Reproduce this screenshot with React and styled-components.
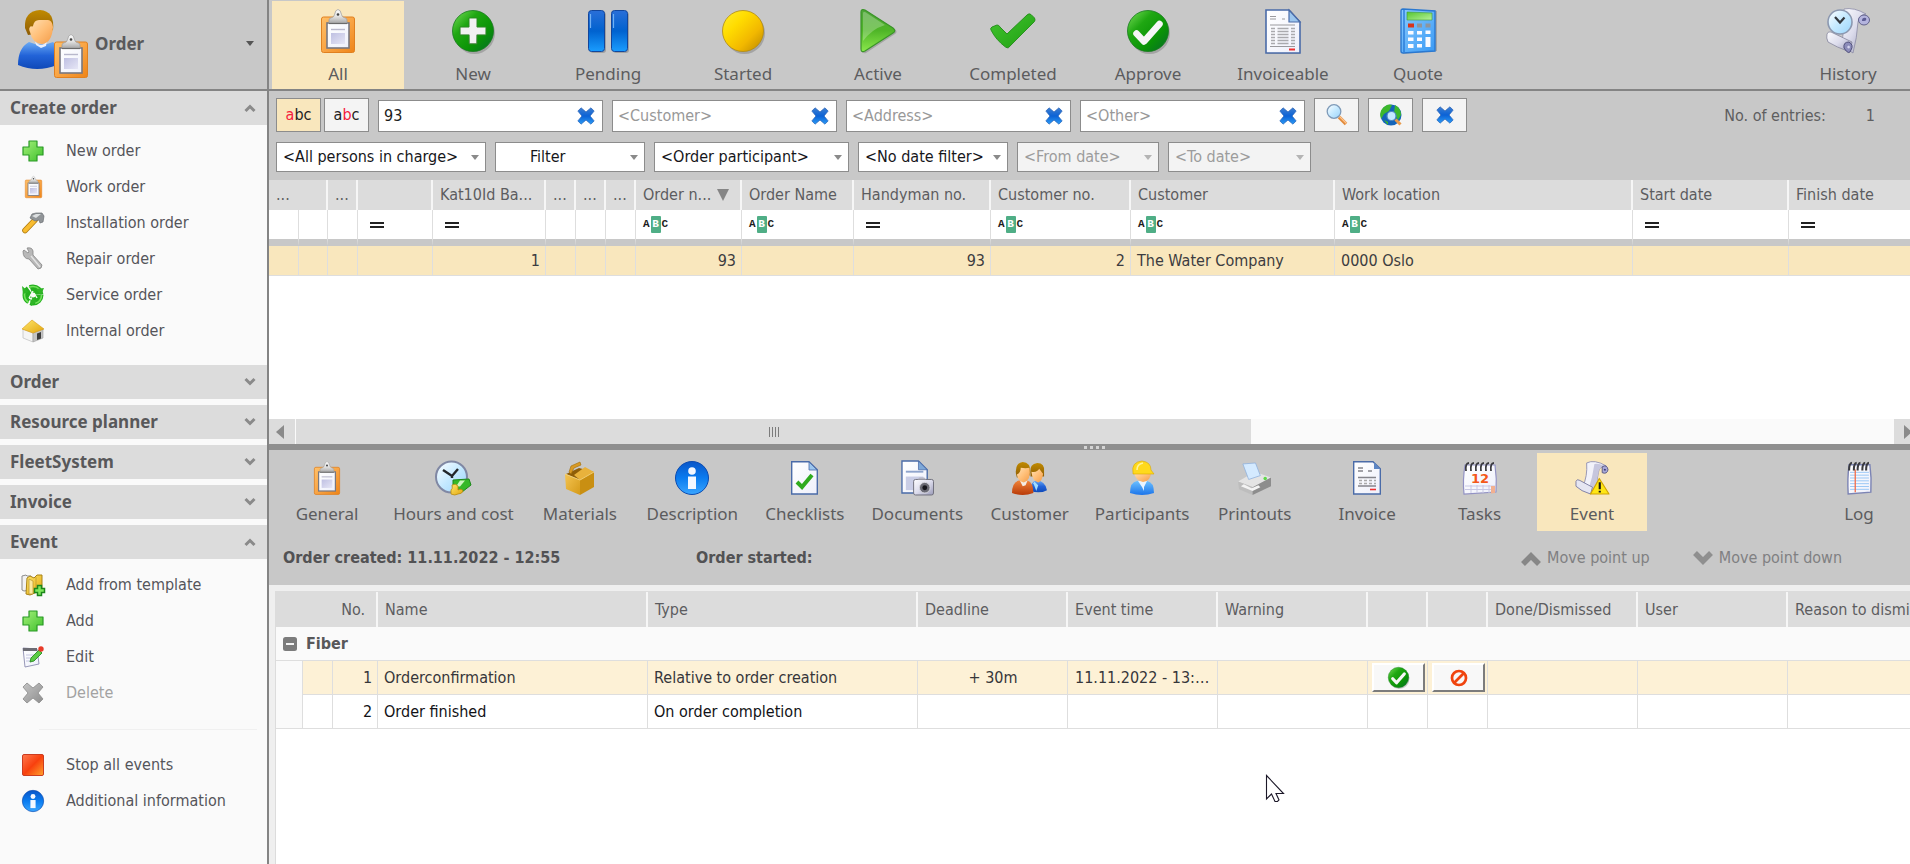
import React from "react";
import styled, { createGlobalStyle, css } from "styled-components";

const GlobalStyle = createGlobalStyle`
  * {
    box-sizing: border-box;
  }
  body {
    margin: 0;
    background: #fff;
    color: #4d4d52;
    font-family: "DejaVu Sans Condensed", Tahoma, sans-serif;
    font-size: 16px;
    line-height: 20px;
    overflow: hidden;
  }
  button, input, select {
    font: inherit;
    color: inherit;
    margin: 0;
  }
  button {
    cursor: pointer;
  }
  a {
    color: inherit;
    text-decoration: none;
  }
  svg {
    display: block;
    flex: none;
    overflow: visible;
  }
`;

/* ---------- icons ---------- */

const Grad = ({ id, stops, flat }) => (
  <linearGradient id={id} x1="0" y1="0" x2={flat ? 0 : 1} y2="1">
    {stops.map((c, i) => (
      <stop key={i} offset={i / (stops.length - 1)} stopColor={c} />
    ))}
  </linearGradient>
);

const IconDefs = () => (
  <svg width="0" height="0" aria-hidden="true">
    <defs>
      <Grad id="orange" stops={["#ffc069", "#f9a545", "#ee8418"]} />
      <Grad id="silver" flat stops={["#fdfdfd", "#e2e2e2", "#a4a4a4"]} />
      <Grad id="paper" stops={["#ffffff", "#eef0fb"]} />
      <Grad id="lilac" stops={["#bfc0e2", "#e6e6f6"]} />
      <Grad id="green" stops={["#7ce05c", "#1fa712", "#0a9306", "#056a2c"]} />
      <Grad id="lime" flat stops={["#4fa43a", "#4fb527", "#8be84c"]} />
      <Grad id="tick" stops={["#43c52f", "#1f9f12"]} />
      <Grad id="plus" stops={["#a4f07a", "#3fc02c"]} />
      <Grad id="blue" flat stops={["#2a6fd8", "#0062cf", "#1a9dff"]} />
      <Grad id="info" flat stops={["#0a56c8", "#0a7cf0", "#3aa6ff"]} />
      <Grad id="cross" flat stops={["#3f7fd0", "#0b62d6", "#2c9bf5"]} />
      <Grad id="yellow" stops={["#ffee2e", "#ffdc00", "#f2b800", "#b88600"]} />
      <Grad id="skin" stops={["#ffe0b4", "#ffbf78", "#f39c48"]} />
      <Grad id="hair" flat stops={["#c08a00", "#8f5d06"]} />
      <Grad id="shirt" flat stops={["#6aaaf4", "#2263d8", "#0f49b8"]} />
      <Grad id="sky" flat stops={["#6cc0ff", "#1b74ea"]} />
      <Grad id="rust" flat stops={["#f0843a", "#b83a08"]} />
      <Grad id="face" stops={["#ffffff", "#c4e9ff", "#9bd4fa"]} />
      <Grad id="calc" stops={["#8acbff", "#3a9af4"]} />
      <Grad id="lcd" stops={["#55c52f", "#b6f29a"]} />
      <Grad id="box" stops={["#f4c452", "#d59a18"]} />
      <Grad id="scroll" stops={["#fdfdff", "#dcdcec", "#9a9ab8"]} />
      <Grad id="grey" stops={["#c4c4c4", "#8e8e8e"]} />
      <Grad id="stop" stops={["#ff7a50", "#f8400e", "#ffa42c"]} />
      <Grad id="gold" stops={["#ffe76c", "#e2a50c"]} />
    </defs>
  </svg>
);

const ClipboardArt = () => (
  <g>
    <rect x="0.5" y="8" width="33" height="35.5" rx="2" fill="url(#orange)" stroke="#e08020" />
    <rect x="6" y="14" width="22" height="25" fill="url(#paper)" stroke="#777780" strokeWidth="1.6" />
    <path d="M10 20.5h14" stroke="#b8b8cc" strokeWidth="1.4" />
    <rect x="10" y="24" width="14" height="11" fill="url(#lilac)" />
    <path
      d="M8 14.5V11q0-2 3-2.5 2-.5 2.5-3 1-5 3.500-5t3.500 5q.5 2.500 2.500 3 3 .5 3 2.500v3.500z"
      fill="url(#silver)"
      stroke="#a0a0a0"
      strokeWidth="0.800"
    />
    <path d="M8 14.500h18" stroke="#6a6a6a" strokeWidth="1.200" />
    <circle cx="17" cy="5.500" r="1.300" fill="#444" />
  </g>
);

const CircleBack = ({ fill, edge }) => (
  <g>
    <ellipse cx="22.500" cy="23" rx="20.500" ry="21" fill="#000" opacity="0.180" />
    <circle cx="21" cy="21" r="20.500" fill={fill} stroke={edge} strokeWidth="0.800" />
  </g>
);

const CrossArt = ({ fill, stroke }) => (
  <path
    d="M5 1l6 5 6-5 4 4-5 6 5 6-4 4-6-5-6 5-4-4 5-6-5-6z"
    fill={fill}
    stroke={stroke}
    strokeWidth="0.800"
    strokeLinejoin="round"
  />
);

const PlusArt = () => (
  <path
    d="M7 1h8v6h6v8h-6v6H7v-6H1V7h6z"
    fill="url(#plus)"
    stroke="#2a9a26"
    strokeWidth="1.200"
    strokeLinejoin="round"
  />
);

const DocArt = () => (
  <g>
    <path d="M2 1.500h24l9 11V45H2z" fill="#000" opacity="0.150" />
    <path d="M1 1h23l11 12v31H1z" fill="url(#paper)" stroke="#4a6ba8" strokeWidth="1.600" />
    <path d="M24 1v12h11z" fill="#9cc6ee" stroke="#4a6ba8" strokeWidth="1.200" />
  </g>
);

const ICONS = {
  clipboard: { box: [34, 44], art: <ClipboardArt /> },
  orderPerson: {
    box: [70, 68],
    art: (
      <g>
        <path d="M0 55Q0 38 11 32q12 5 24 0 4 3 4 8v15q-20 8-39 0z" fill="url(#shirt)" />
        <path d="M17 31q6 8 12 0l-1 5-5 2-5-3z" fill="#e8eefc" />
        <path d="M7 18Q6 1 22 0q15 1 13 20l-4 2-21 3z" fill="url(#hair)" />
        <path d="M12 22q-2-4 1-6 1 1 2 0 1-6 6-6h9q4 0 5 7-1 16-11 17-10-1-12-12z" fill="url(#skin)" />
        <g transform="translate(36 24)">
          <ClipboardArt />
        </g>
      </g>
    ),
  },
  newRound: {
    box: [42, 42],
    art: (
      <g>
        <CircleBack fill="url(#green)" edge="#157a1c" />
        <path d="M17 8h8v9h9v8h-9v9h-8v-9H8v-8h9z" fill="url(#silver)" stroke="#2a8a22" />
        <path d="M18 9h6v9h9v6h-9v9h-6v-9H9v-6h9z" fill="#f1f1f1" />
      </g>
    ),
  },
  pause: {
    box: [40, 42],
    art: (
      <g>
        <rect x="2" y="2" width="16" height="41" rx="3" fill="#000" opacity="0.200" />
        <rect x="25" y="2" width="16" height="41" rx="3" fill="#000" opacity="0.200" />
        <rect x="0.500" y="0.500" width="16" height="41" rx="3" fill="url(#blue)" stroke="#12469c" />
        <rect x="23.500" y="0.500" width="16" height="41" rx="3" fill="url(#blue)" stroke="#12469c" />
        <path d="M2.500 4v14M25.500 4v14" stroke="#6fb0f4" strokeWidth="1.200" />
      </g>
    ),
  },
  started: { box: [42, 42], art: <CircleBack fill="url(#yellow)" edge="#b08a10" /> },
  play: {
    box: [36, 44],
    art: (
      <g>
        <path d="M2 4q0-4 4-2l29 18q3 3 0 5L6 44q-4 1-4-3z" fill="#000" opacity="0.180" />
        <path
          d="M1 3q0-3.500 4-2l28 18q3.500 3 0 5L5 42q-4 2-4-2z"
          fill="url(#lime)"
          stroke="#3a9428"
          strokeWidth="1.200"
        />
        <path d="M3 4q0-1.500 2-1l20 13Q12 20 3 32z" fill="#fff" opacity="0.250" />
      </g>
    ),
  },
  tick: {
    box: [46, 36],
    art: (
      <g>
        <path d="M2 18l6-5 9 8L38 2l7 5-27 29z" fill="#000" opacity="0.180" />
        <path
          d="M1 17q-1-2 1-3l5-2q2 0 3 2l7 7L37 2q2-2 4-.5l3.500 3.500q1 2 0 3.500L19 34q-2 1.500-3.500 0Q6 27 1 17z"
          fill="url(#tick)"
          stroke="#2a9220"
        />
      </g>
    ),
  },
  approve: {
    box: [42, 42],
    art: (
      <g>
        <CircleBack fill="url(#green)" edge="#157a1c" />
        <path
          d="M9.500 23.500l7.500 8L32.500 14"
          fill="none"
          stroke="#f6f6f6"
          strokeWidth="6.500"
          strokeLinecap="round"
          strokeLinejoin="round"
        />
      </g>
    ),
  },
  invoiceable: {
    box: [36, 45],
    art: (
      <g>
        <DocArt />
        <path d="M5 7.500h6M5 10h6M17 10h3M5 16h25M5 37.500h25" stroke="#9a9a9e" strokeWidth="1.200" />
        <path
          d="M6 19.500h4M6 22.500h4M6 25.500h4M6 28.500h4M6 31.500h4M6 34.500h4M12.500 19.500h11M12.500 22.500h11M12.500 25.500h11M12.500 28.500h11M12.500 31.500h11M12.500 34.500h11M26 19.500h4M26 22.500h4M26 25.500h4M26 28.500h4M26 31.500h4M26 34.500h4"
          stroke="#aaaaae"
          strokeWidth="1.300"
        />
        <path d="M24 40.500h6" stroke="#f03030" strokeWidth="2" />
      </g>
    ),
  },
  calculator: {
    box: [37, 46],
    art: (
      <g>
        <path d="M2 1l35 2v40L3 46z" fill="#000" opacity="0.180" />
        <path d="M3 1q-2 0-2 2v40q0 2 2 2l32-2V3z" fill="url(#calc)" stroke="#2a78d0" strokeWidth="1.400" />
        <path d="M4 2v42" stroke="#1d6fd0" strokeWidth="1.200" />
        <path d="M7 4l25 1v7H7z" fill="url(#lcd)" stroke="#3e9a3a" strokeWidth="0.600" />
        <path d="M8 15.500h6v4H8z" fill="#d8341a" />
        <path d="M17 15.500h5v4h-5zM25.500 15.500h5v4h-5z" fill="#8f959c" />
        <path
          d="M8 23h5.500v3.500H8zM17 23h5v3.500h-5zM25.500 22.500h5V26h-5zM8 29.500h5.500V33H8zM17 29.500h5V33h-5zM8 36h5.500v4H8zM17 36h5v3.500h-5zM25.500 29h5v10h-5z"
          fill="#fbfbff"
        />
      </g>
    ),
  },
  history: {
    box: [44, 46],
    art: (
      <g>
        <path
          d="M18 1q10-2 22 5-7 1-8 8-1 16-5 31l-12-8q4-16 3-36z"
          fill="url(#scroll)"
          stroke="#8a8aa4"
          strokeWidth="0.800"
        />
        <path d="M1 26q1-3 4-2l21 10-2 10Q10 39 2 34q-2-4-1-8z" fill="url(#scroll)" stroke="#85859c" strokeWidth="0.800" />
        <path d="M18 40q-1-6 5-6 5 3 2 8-2 6-7-2z" fill="#8c8cba" stroke="#50507c" />
        <path d="M21 39q2-3 3 0-1 3-3 0z" fill="#d4d4ee" />
        <ellipse cx="38" cy="12" rx="5.500" ry="5" fill="#b4b4de" stroke="#62628c" />
        <path d="M36 13q0-4 4-3 1 3-2 3z" fill="#5c5c94" />
        <circle cx="14" cy="14" r="12" fill="url(#face)" stroke="#8c98b0" strokeWidth="1.600" />
        <path d="M9 9l5 5.500 4.500-5" fill="none" stroke="#33383e" strokeWidth="2.200" />
      </g>
    ),
  },
  hours: {
    box: [36, 36],
    art: (
      <g>
        <circle cx="16.500" cy="17" r="15.500" fill="url(#face)" stroke="#8088a4" strokeWidth="2" />
        <path d="M8 10l9 6 6-7M17 16v2" fill="none" stroke="#22262a" strokeWidth="2.400" />
        <path d="M18 20l16-1 2 6-9 7-9-5z" fill="#35b828" stroke="#1d8a1c" />
        <path d="M25 20.500h5l-5 6h-4z" fill="#cdf5c0" />
        <path d="M17 25q4-2 6 1v4q4-2 5 1-1 3-5 3-3 2-7 0v-4q2-1 1-5z" fill="url(#gold)" stroke="#b88a10" strokeWidth="0.800" />
      </g>
    ),
  },
  box: {
    box: [29, 33],
    art: (
      <g>
        <path d="M0 12l15 6v15L1 27z" fill="url(#box)" />
        <path d="M29 10l-14 8v15l14-8z" fill="#c98f12" />
        <path d="M1 12l13-6 15 4-14 8z" fill="#8f5e08" />
        <path d="M4 10l2-6 9-4 1 3-7 3-3 6z" fill="#d99a24" stroke="#a06c0a" strokeWidth="0.600" />
        <path d="M9 13l11-8 9 5-14 8z" fill="#e8b23c" />
        <path d="M0 12l15 6 14-8" fill="none" stroke="#f8d880" strokeWidth="0.800" />
      </g>
    ),
  },
  info: {
    box: [34, 34],
    art: (
      <g>
        <circle cx="17" cy="17" r="16.500" fill="url(#info)" stroke="#0b4bb0" />
        <circle cx="17" cy="10" r="3.800" fill="#f4f8ff" />
        <path d="M13 15.500h8V28h-8z" fill="#f4f8ff" />
      </g>
    ),
  },
  checklist: {
    box: [27, 34],
    art: (
      <g>
        <path d="M0.700 0.700H18l8.300 8V33H0.700z" fill="url(#paper)" stroke="#4a6ba8" strokeWidth="1.400" />
        <path d="M18 1v8h8z" fill="#9cc6ee" stroke="#4a6ba8" strokeWidth="0.800" />
        <path d="M6 21l5 5 10-12" fill="none" stroke="#2fab1e" strokeWidth="4" />
      </g>
    ),
  },
  documents: {
    box: [34, 37],
    art: (
      <g>
        <path d="M1 1h17l9 9v24H1z" fill="url(#paper)" stroke="#4a6ba8" strokeWidth="1.400" />
        <path d="M18 1v9h9z" fill="#7ea8d8" stroke="#4a6ba8" strokeWidth="0.800" />
        <path d="M5 12h18" stroke="#8fa4cc" strokeWidth="2" />
        <path d="M5 17h18v14H5z" fill="#c9cde6" />
        <rect x="13" y="20" width="20.500" height="16" rx="2" fill="url(#scroll)" stroke="#70707c" />
        <path d="M17 20l2-2h5l2 2z" fill="#b4b4c0" />
        <circle cx="24.500" cy="28.500" r="5.500" fill="#6a6a74" stroke="#d8d8e0" />
        <circle cx="24.500" cy="28.500" r="2.500" fill="#16161c" />
      </g>
    ),
  },
  customer: {
    box: [36, 34],
    art: (
      <g>
        <path d="M19 30q0-10 6-11 9 0 11 10-7 4-17 1z" fill="url(#shirt)" />
        <path d="M23 20l4 4-2 6-3-8z" fill="#a0dcff" />
        <path d="M19 10q-1-8 7-9 8 0 7 9v5H19z" fill="url(#hair)" />
        <path d="M20 10q6 1 8-3 3 4 4 5-1 8-5 9-6-1-7-11z" fill="url(#skin)" />
        <path d="M0 32q0-11 7-13h9q6 2 6 13-11 4-22 0z" fill="url(#rust)" />
        <path d="M8 19h8l-2 5-3 1z" fill="#f4ece4" />
        <path d="M4 12Q3 1 11 0q8 0 8 11l-2 5H5z" fill="url(#hair)" />
        <path d="M5 13q4-2 4-7 5 1 9 0 2 13-6 15-6-1-7-8z" fill="url(#skin)" />
      </g>
    ),
  },
  participant: {
    box: [24, 34],
    art: (
      <g>
        <path d="M0 32Q0 21 7 20h10q7 1 7 12-12 4-24 0z" fill="url(#sky)" />
        <path d="M8 20h9l-3 6v4l-2-4z" fill="#e8f4ff" />
        <path d="M4 11h17q0 9-8 10-8-2-9-10z" fill="url(#skin)" />
        <path d="M3 12Q1 1 12 0q9 1 9 9l3 4H3z" fill="#ffd91c" stroke="#d8a800" strokeWidth="0.600" />
        <path d="M7 9q0-6 6-7" fill="none" stroke="#fff39a" strokeWidth="1.600" />
      </g>
    ),
  },
  printer: {
    box: [34, 34],
    art: (
      <g>
        <path d="M0 20l9-5 14-3 11 4-18 10z" fill="#e4e4e4" />
        <path d="M5 2l13-1 5 13-12 4z" fill="#d4eaff" stroke="#8fb0dc" strokeWidth="0.800" />
        <path d="M0 20l15 6v8L1 28z" fill="#bdbdbd" />
        <path d="M15 26l19-10v9l-19 9z" fill="#8d8d8d" />
        <path d="M3 25l12 5 8-4-2-2-7 3-8-4z" fill="#f4f4f4" />
        <circle cx="28" cy="17" r="1.800" fill="#5fd84a" />
      </g>
    ),
  },
  invoice: {
    box: [28, 34],
    art: (
      <g>
        <path d="M0.700 0.700H20l7.300 7V33H0.700z" fill="url(#paper)" stroke="#4a6ba8" strokeWidth="1.400" />
        <path d="M21 1v7h6z" fill="#5d86c4" />
        <path d="M5 7h5M5 10h5M15 10h4M5 16.500h18M5 25h18" stroke="#85858c" strokeWidth="1.300" />
        <path
          d="M6 19.500h3M11 19.500h3M16 19.500h3M21 19.500h2M6 22.500h3M11 22.500h3M16 22.500h3M21 22.500h2"
          stroke="#aaa"
          strokeWidth="1.300"
        />
        <path d="M17 28.500h6" stroke="#f03030" strokeWidth="1.600" />
      </g>
    ),
  },
  tasks: {
    box: [34, 33],
    art: (
      <g>
        <path d="M2 3h30q2 14 1 27l-32 2Q-.5 18 2 3z" fill="url(#paper)" stroke="#9292c4" strokeWidth="1.200" />
        <path d="M2 24h30M2 27.500h30M8 23v8M14 23v8M20 23v8M26 23v8" stroke="#c8c8e4" />
        <path d="M28 24h4v7l-4 .5z" fill="#f2b090" />
        <path
          d="M3 9q-1-8 3-8M8 9q-1-8 3-8M13 9q-1-8 3-8M18 9q-1-8 3-8M23 9q-1-8 3-8M28 9q-1-8 3-8"
          fill="none"
          stroke="#3a3a3e"
          strokeWidth="1.800"
        />
        <text x="17" y="21" textAnchor="middle" fontSize="13" fontWeight="700" fontFamily="DejaVu Sans" fill="#f4581a">
          12
        </text>
      </g>
    ),
  },
  event: {
    box: [35, 35],
    art: (
      <g>
        <path
          d="M12 2q8-4 20 3-7 0-8 7-1 11-5 21L8 26q5-10 4-24z"
          fill="#f2f2fa"
          stroke="#8c8cb0"
          strokeWidth="0.900"
        />
        <path d="M20 3q-2 14-6 26l5 3q4-10 5-20 1-6 6-7-6-3-10-2z" fill="#c6c6de" />
        <path d="M1 21q1-3 4-1l13 7-2 7Q6 31 1 26z" fill="#e6e6f2" stroke="#74749c" strokeWidth="0.900" />
        <path d="M28 6q5-3 6 3-1 5-6 3z" fill="#a8a8d8" stroke="#52527c" strokeWidth="0.900" />
        <path d="M29.500 9q1-2 2.500 0-1 2-2.500 0z" fill="#3c3c74" />
        <path d="M25 18l10 16H16z" fill="#ffe614" stroke="#d0a400" strokeWidth="1.200" strokeLinejoin="round" />
        <path d="M25.500 22v7M25.500 30.500v2" stroke="#181818" strokeWidth="2.200" />
      </g>
    ),
  },
  log: {
    box: [26, 36],
    art: (
      <g>
        <path d="M2 4h22q2 14 1 29l-24 2Q0 18 2 4z" fill="url(#paper)" stroke="#7c84b4" strokeWidth="1.500" />
        <path d="M3 12h20M3 15h20M3 18h20M3 21h20M3 24h20M3 27h20M3 30h20" stroke="#8cc0f4" strokeWidth="0.900" />
        <path d="M8.500 9v24" stroke="#f4704c" strokeWidth="1.400" />
        <path
          d="M2 10q0-8 3-8M7 10q0-8 3-8M11 10q0-8 3-8M16 10q0-8 3-8M20 10q0-8 3-8"
          fill="none"
          stroke="#3a3a3e"
          strokeWidth="2.200"
        />
      </g>
    ),
  },
  plus: { box: [22, 22], art: <PlusArt /> },
  hammer: {
    box: [22, 22],
    art: (
      <g>
        <path d="M13 8L3 18.500" stroke="#b07c10" strokeWidth="5.600" strokeLinecap="round" />
        <path d="M13 8L3 18.500" stroke="#f8bc30" strokeWidth="4" strokeLinecap="round" />
        <path d="M8 6l2-4 4-1h6l2 3-1 6-3 1-1-3-4 1z" fill="#909497" stroke="#6c7074" strokeWidth="0.700" />
        <path d="M10 4l4-2h5l-5 4z" fill="#dcdfe0" />
      </g>
    ),
  },
  wrench: {
    box: [22, 22],
    art: (
      <g>
        <path
          d="M1 3l1-1 4 3 1-1-2-4q5-1 6 3l0 4 9 10q0 4-4 4L7 11Q1 11 1 3z"
          fill="#b8b8b8"
          stroke="#858585"
          strokeWidth="0.800"
        />
        <path d="M9 8l9 11" stroke="#e4e4e4" strokeWidth="1.400" />
      </g>
    ),
  },
  recycle: {
    box: [22, 22],
    art: (
      <g>
        <circle cx="11" cy="11" r="6.500" fill="none" stroke="#25b01f" strokeWidth="8" strokeDasharray="12.200 1.400" />
        <circle cx="11" cy="11" r="8.500" fill="none" stroke="#74e25c" strokeWidth="1.600" strokeDasharray="11 6.800" />
        <path d="M0 2l1 8 6-2zM22 4l-8 1 5 6zM9 22l-1-9 7 4z" fill="#2fb526" />
        <path d="M11 7l-4 7M12 9l3 5M7 14l3 1" stroke="#f0fcee" strokeWidth="1.400" />
      </g>
    ),
  },
  house: {
    box: [22, 22],
    art: (
      <g>
        <path d="M1 9l10 4v9L1 18z" fill="#f4f4f4" stroke="#b4b4b4" strokeWidth="0.600" />
        <path d="M11 13l10-4v9l-10 4z" fill="#c4c4c4" stroke="#a0a0a0" strokeWidth="0.600" />
        <path d="M15 13.500l4-1.500v6.500L15 20z" fill="#3c3c3c" />
        <path d="M0 9L10 0l12 9-11 4z" fill="url(#gold)" stroke="#d89a10" strokeWidth="0.600" />
      </g>
    ),
  },
  template: {
    box: [24, 22],
    art: (
      <g>
        <path d="M1 2l4-1 1 1h4v14l-7 1-2-1z" fill="#f2f2f2" stroke="#8c8c8c" />
        <path d="M5 20L6 4l3-2 4 2 3-3h5v15l-12 5z" fill="url(#gold)" stroke="#a88218" />
        <path d="M8 20V5l4 2v13zM15 3v12" fill="#fbe9a0" stroke="#b8942c" strokeWidth="0.700" />
        <g transform="translate(13 11) scale(0.500)">
          <path d="M7 1h8v6h6v8h-6v6H7v-6H1V7h6z" fill="#7fe85c" stroke="#1c861c" strokeWidth="3" />
        </g>
      </g>
    ),
  },
  edit: {
    box: [22, 22],
    art: (
      <g>
        <path d="M1 2l14 1 2 15-14 3z" fill="url(#paper)" stroke="#8c8cb0" strokeWidth="0.900" />
        <path d="M1 2h14v3H1z" fill="#6c6c74" />
        <path d="M4 9h9M4 12h8M4 15h6" stroke="#c4c4e0" />
        <path d="M8 16l1-4 8-8 3 3-8 8z" fill="#5ccc44" stroke="#2a8a24" strokeWidth="0.900" />
        <circle cx="19" cy="3" r="2.700" fill="#e83a28" />
      </g>
    ),
  },
  crossGrey: { box: [22, 22], art: <CrossArt fill="url(#grey)" stroke="#8a8a8a" /> },
  crossBlue: { box: [22, 22], art: <CrossArt fill="url(#cross)" stroke="#2560b4" /> },
  stop: {
    box: [22, 22],
    art: <rect x="0.500" y="0.500" width="21" height="21" rx="1.500" fill="url(#stop)" stroke="#cc3c20" />,
  },
  search: {
    box: [22, 22],
    art: (
      <g>
        <path d="M13 13l7 7" stroke="#e08a3c" strokeWidth="3.600" />
        <path d="M13 12l7.500 7.500" stroke="#ffc48c" strokeWidth="1.200" />
        <circle cx="8" cy="7.500" r="6.800" fill="url(#face)" stroke="#7e9ab8" strokeWidth="1.300" />
      </g>
    ),
  },
  globe: {
    box: [22, 22],
    art: (
      <g>
        <circle cx="11" cy="11" r="10.500" fill="#1464b8" />
        <path d="M2 5q5-6 10-4l-3 6-5 3-3 5q-2-6 1-10zM15 1q6 3 6 10l-3 5-4-7zM4 16l4 2v3z" fill="#3cb82c" />
        <circle cx="11.500" cy="12" r="4.500" fill="#c4e9ff" stroke="#4c86c0" strokeWidth="1.200" />
        <path d="M15.500 15.500l5 5" stroke="#e89a4c" strokeWidth="3" />
      </g>
    ),
  },
  forbid: {
    box: [20, 20],
    art: (
      <g fill="none" stroke="#f0440e" strokeWidth="3">
        <circle cx="10" cy="10" r="7.800" />
        <path d="M4.500 15.500l11-11" />
      </g>
    ),
  },
  chevronUp: { box: [12, 8], art: <path d="M1.500 7L6 2.500 10.500 7" fill="none" stroke="#8a8a8a" strokeWidth="3" /> },
  chevronDown: { box: [12, 8], art: <path d="M1.500 1L6 5.500 10.500 1" fill="none" stroke="#8a8a8a" strokeWidth="3" /> },
  moveUp: { box: [20, 15], art: <path d="M2 13l8-8 8 8" fill="none" stroke="#878787" strokeWidth="5.500" /> },
  moveDown: { box: [20, 15], art: <path d="M2 2l8 8 8-8" fill="none" stroke="#8f8f8f" strokeWidth="5.500" /> },
  caret: { box: [8, 5], art: <path d="M0 0h8L4 5z" fill="currentColor" /> },
  sort: { box: [12, 12], art: <path d="M0 0h12L6 12z" fill="#858585" /> },
  arrowLeft: { box: [8, 14], art: <path d="M8 0v14L0 7z" fill="#8a8a8a" /> },
  arrowRight: { box: [8, 14], art: <path d="M0 0v14l8-7z" fill="#8a8a8a" /> },
  equals: { box: [14, 6], art: <path d="M0 1h14M0 5h14" stroke="#222" strokeWidth="2" /> },
  collapse: {
    box: [14, 14],
    art: (
      <g>
        <rect width="14" height="14" rx="2.500" fill="#7c7c7c" />
        <path d="M3 7h8" stroke="#f4f4f4" strokeWidth="2" />
      </g>
    ),
  },
  cursor: {
    box: [18, 27],
    art: (
      <path
        d="M0.500 0.500v23.500l5-5 3.500 7.500h2.500l1.500-1.500-3-6.500h7.500z"
        fill="#fff"
        stroke="#1c1828"
        strokeWidth="1.100"
      />
    ),
  },
};

const Icon = ({ name, height }) => {
  const { box, art } = ICONS[name];
  const h = height || box[1];
  return (
    <svg width={Math.round((box[0] * h) / box[1])} height={h} viewBox={`0 0 ${box[0]} ${box[1]}`} aria-hidden="true">
      {art}
    </svg>
  );
};

/* ---------- sidebar ---------- */

const Page = styled.div`
  display: grid;
  grid-template-columns: 269px minmax(0, 1fr);
  min-height: 100vh;
`;

const Sidebar = styled.aside`
  background: #fafafa;
  border-right: 2px solid #848484;
`;

const ModuleButton = styled.button`
  display: flex;
  align-items: center;
  width: 100%;
  height: 91px;
  padding: 0 13px 2px 18px;
  border: 0;
  border-bottom: 2px solid #848484;
  background: #c8c8c8;
  font: 700 17px/24px "Noto Sans", sans-serif;
  color: #5a5a5c;
  gap: 7px;
  svg:last-child {
    margin-left: auto;
    color: #555;
  }
`;

const Section = styled.section`
  margin-bottom: ${(p) => (p.$open ? "16px" : "6px")};
`;

const SectionHead = styled.button`
  display: flex;
  align-items: center;
  justify-content: space-between;
  width: 100%;
  height: 34px;
  padding: 0 11px 0 10px;
  border: 0;
  background: #dcdcdc;
  font: 700 17px/24px "Noto Sans", sans-serif;
  color: #58585a;
`;

const MenuList = styled.ul`
  list-style: none;
  margin: 0;
  padding: 8px 0 0;
`;

const MenuLink = styled.a`
  display: flex;
  align-items: center;
  height: 36px;
  color: ${(p) => (p.$disabled ? "#a2a2a2" : "#55555a")};
`;

const MenuIcon = styled.span`
  display: flex;
  justify-content: center;
  width: 66px;
`;

const MenuDivider = styled.li`
  height: 36px;
  padding: 18px 10px 0 39px;
  &::before {
    content: "";
    display: block;
    border-top: 1px solid #f0f0f0;
  }
`;

/* ---------- toolbars ---------- */

const Main = styled.main`
  display: flex;
  flex-direction: column;
  min-width: 0;
`;

const toolText = css`
  font: 17px/24px "Noto Sans", sans-serif;
  color: #5c5c5e;
`;

const StatusBar = styled.nav`
  display: flex;
  gap: 3px;
  height: 91px;
  padding: 1px 0 0 3px;
  background: #c8c8c8;
  border-bottom: 2px solid #848484;
`;

const StatusButton = styled.button`
  ${toolText}
  display: flex;
  flex-direction: column;
  align-items: center;
  width: ${(p) => (p.$last ? "124px" : "132px")};
  margin-left: ${(p) => (p.$last ? "auto" : "0")};
  padding: 6px 0 0;
  gap: 7px;
  border: 0;
  background: ${(p) => (p.$active ? "#f9e7bd" : "transparent")};
`;

const StatusIcon = styled.span`
  display: flex;
  align-items: center;
  height: 48px;
`;

const Filters = styled.form`
  background: #c8c8c8;
  padding: 7px 7px 8px;
`;

const FilterRow = styled.div`
  display: flex;
  align-items: flex-end;
  gap: 9px;
  & + & {
    margin-top: 10px;
  }
`;

const MatchGroup = styled.div`
  display: flex;
  gap: 3px;
`;

const ToolButton = styled.button`
  display: flex;
  align-items: center;
  justify-content: center;
  width: 45px;
  height: 34px;
  padding: 0;
  border: 1px solid #8c8c8c;
  background: ${(p) => (p.$active ? "#f9e7bd" : "#f4f4f4")};
  color: #222;
  em {
    font-style: normal;
    color: #f5203c;
  }
`;

const SearchField = styled.label`
  display: flex;
  align-items: center;
  width: 225px;
  height: 32px;
  padding-right: 7px;
  border: 1px solid #8c8c8c;
  background: #fff;
  input {
    flex: 1;
    min-width: 0;
    border: 0;
    outline: 0;
    padding: 0 0 0 5px;
    background: none;
    color: #1c1c20;
  }
  input::placeholder {
    color: #989898;
    opacity: 1;
  }
`;

const ClearButton = styled.button`
  padding: 0;
  border: 0;
  background: none;
`;

const Entries = styled.p`
  display: flex;
  gap: 40px;
  margin: 0 28px 0 auto;
  line-height: 32px;
  color: #5e5e60;
`;

const SelectField = styled.label`
  position: relative;
  width: ${(p) => p.$width}px;
  height: 30px;
  color: ${(p) => (p.$off ? "#9c9c9c" : "#16161a")};
  select {
    appearance: none;
    width: 100%;
    height: 100%;
    padding: 0 18px 0 ${(p) => (p.$indent ? "34px" : "6px")};
    border: 1px solid #8c8c8c;
    border-radius: 0;
    background: ${(p) => (p.$off ? "#f3f3f3" : "#fff")};
    opacity: 1;
  }
  svg {
    position: absolute;
    right: 7px;
    top: 13px;
    color: ${(p) => (p.$off ? "#b4b4b4" : "#8a8a8a")};
    pointer-events: none;
  }
`;

/* ---------- order list ---------- */

const OrderPane = styled.div`
  height: 239px;
  overflow: hidden;
  background: #fff;
`;

const Grid = styled.table`
  width: 100%;
  table-layout: fixed;
  border-collapse: separate;
  border-spacing: 0;
  th,
  td {
    padding: 0 5px 0 6px;
    overflow: hidden;
    white-space: nowrap;
    text-align: left;
    border-right: 1px solid #dedede;
  }
  th {
    padding-left: 7px;
    background: #dcdcdc;
    border-right: 2px solid #f6f6f6;
    font-weight: 400;
    color: #5c5c60;
  }
  th:last-child,
  td:last-child {
    padding-right: 0;
    border-right: 0;
  }
`;

const OrderGrid = styled(Grid)`
  th {
    height: 30px;
  }
`;

const FilterCells = styled.tr`
  td {
    height: 36px;
    border-bottom: 7px solid #c8c8c8;
  }
`;

const OrderRow = styled.tr`
  td {
    height: 30px;
    background: #f9e7bd;
    border-bottom: 1px solid #dedede;
    color: #3c3c40;
  }
`;

const Cell = styled.td`
  && {
    text-align: ${(p) => p.$align || "left"};
  }
`;

const SortHead = styled.span`
  display: flex;
  align-items: center;
  gap: 6px;
`;

const Indent = styled.span`
  display: block;
  padding-left: 6px;
`;

const AbcMark = styled.span`
  display: flex;
  align-items: center;
  gap: 1px;
  padding-left: 1px;
  font: 700 11px/17px "Liberation Mono", monospace;
  color: #1c1c1c;
  b {
    width: 10px;
    text-align: center;
    border-radius: 1px;
    background: #4fae86;
    color: #fff;
  }
`;

const ScrollBar = styled.div`
  display: grid;
  grid-template-columns: 26px minmax(0, 956fr) minmax(0, 641fr) 16px;
  gap: 1px;
  height: 25px;
  background: #fafafa;
`;

const ScrollEnd = styled.button`
  display: flex;
  align-items: center;
  padding: 0 0 0 ${(p) => (p.$right ? "10px" : "7px")};
  border: 0;
  overflow: hidden;
  background: #dcdcdc;
  ${(p) => p.$right && "grid-column: 4;"}
`;

const ScrollThumb = styled.div`
  display: flex;
  align-items: center;
  justify-content: center;
  gap: 2px;
  background: #dcdcdc;
  i {
    width: 1px;
    height: 10px;
    background: #7c7c7c;
  }
`;

const Splitter = styled.div`
  display: flex;
  align-items: center;
  justify-content: center;
  gap: 3px;
  height: 6px;
  padding-left: 10px;
  background: #8f8f8f;
  i {
    width: 3px;
    height: 3px;
    background: #d4d4d4;
  }
`;

/* ---------- detail pane ---------- */

const Details = styled.section`
  position: relative;
  flex: 1;
  background: #efefef;
`;

const DetailHead = styled.div`
  background: #c8c8c8;
`;

const TabBar = styled.nav`
  display: flex;
  padding: 3px 0 0 3px;
`;

const TabGroup = styled.div`
  display: flex;
  flex: 1;
  justify-content: space-between;
  margin-right: 161px;
`;

const Tab = styled.button`
  ${toolText}
  display: flex;
  flex-direction: column;
  align-items: center;
  gap: 6px;
  width: ${(p) => p.$width || 110}px;
  height: 78px;
  padding: 7px 0 0;
  border: 0;
  white-space: nowrap;
  background: ${(p) => (p.$active ? "#f9e7bd" : "transparent")};
`;

const TabIcon = styled.span`
  display: flex;
  align-items: center;
  height: 36px;
`;

const InfoBar = styled.div`
  display: flex;
  align-items: center;
  height: 54px;
  padding: 0 68px 0 14px;
`;

const InfoText = styled.strong`
  min-width: 413px;
  color: #525254;
`;

const MoveGroup = styled.div`
  display: flex;
  gap: 43px;
  margin-left: auto;
`;

const MoveButton = styled.button`
  display: flex;
  align-items: center;
  gap: 6px;
  padding: 0;
  border: 0;
  background: none;
  color: #808082;
`;

const EventPane = styled.div`
  min-height: 274px;
  margin: 6px 0 0 6px;
  border: solid #dcdcdc;
  border-width: 1px 0 0 1px;
  background: #fff;
`;

const EventGrid = styled(Grid)`
  th {
    height: 35px;
    padding-left: 7px;
  }
  th:first-child {
    text-align: right;
    padding-right: 11px;
  }
`;

const GroupCell = styled.td`
  &&& {
    height: 34px;
    padding: 0 7px;
    background: #fafafa;
    border-right: 0;
    border-bottom: 1px solid #dedede;
  }
`;

const GroupButton = styled.button`
  display: flex;
  align-items: center;
  gap: 9px;
  padding: 0;
  border: 0;
  background: none;
  font-weight: 700;
  color: #58585a;
`;

const EventRow = styled.tr`
  td {
    height: 34px;
    border-bottom: 1px solid #dedede;
    background: ${(p) => (p.$active ? "#fdf1d6" : "#fff")};
    color: ${(p) => (p.$active ? "#36363a" : "#121216")};
  }
`;

const GutterCell = styled.td`
  && {
    background: #fafafa;
  }
`;

const TimeCell = styled.td`
  && {
    padding-left: 7px;
    text-overflow: ellipsis;
  }
`;

const ActionCell = styled.td`
  && {
    padding: 0 2px 0 4px;
  }
`;

const ActionButton = styled.button`
  display: flex;
  align-items: center;
  justify-content: center;
  width: 100%;
  height: 29px;
  padding: 0;
  border: 2px solid;
  border-color: #fff #7c7c7c #7c7c7c #fff;
  background: #f8f8f8;
`;

const Pointer = styled.span`
  position: absolute;
  left: calc(61% - 4px);
  top: 325px;
  pointer-events: none;
`;

/* ---------- data ---------- */

const createItems = [
  ["plus", "New order"],
  ["clipboard", "Work order"],
  ["hammer", "Installation order"],
  ["wrench", "Repair order"],
  ["recycle", "Service order"],
  ["house", "Internal order"],
];

const eventItems = [
  ["template", "Add from template"],
  ["plus", "Add"],
  ["edit", "Edit"],
  ["crossGrey", "Delete", true],
];

const eventExtras = [
  ["stop", "Stop all events"],
  ["info", "Additional information"],
];

const statuses = [
  ["clipboard", "All"],
  ["newRound", "New"],
  ["pause", "Pending"],
  ["started", "Started"],
  ["play", "Active"],
  ["tick", "Completed"],
  ["approve", "Approve"],
  ["invoiceable", "Invoiceable"],
  ["calculator", "Quote"],
];

const selects = [
  { text: "<All persons in charge>", width: 210 },
  { text: "Filter", width: 150, indent: true },
  { text: "<Order participant>", width: 195 },
  { text: "<No date filter>", width: 150 },
  { text: "<From date>", width: 142, off: true },
  { text: "<To date>", width: 143, off: true },
];

const orderColumns = [
  { w: 30, head: "...", span: 2 },
  { w: 29 },
  { w: 30, head: "..." },
  { w: 75, head: "", filter: "eq" },
  { w: 113, head: "Kat10Id Ba...", filter: "eq", value: "1", align: "right" },
  { w: 30, head: "..." },
  { w: 30, head: "..." },
  { w: 30, head: "..." },
  { w: 106, head: "Order n...", filter: "abc", value: "93", align: "right", sorted: true },
  { w: 112, head: "Order Name", filter: "abc" },
  { w: 137, head: "Handyman no.", filter: "eq", value: "93", align: "right" },
  { w: 140, head: "Customer no.", filter: "abc", value: "2", align: "right" },
  { w: 204, head: "Customer", filter: "abc", value: "The Water Company" },
  { w: 298, head: "Work location", filter: "abc", value: "0000 Oslo" },
  { w: 156, head: "Start date", filter: "eq" },
  { head: "Finish date", filter: "eq" },
];

const tabs = [
  ["clipboard", "General", 34],
  ["hours", "Hours and cost", 36, 138],
  ["box", "Materials", 33],
  ["info", "Description", 34],
  ["checklist", "Checklists", 34],
  ["documents", "Documents", 36],
  ["customer", "Customer", 33],
  ["participant", "Participants", 34],
  ["printer", "Printouts", 33],
  ["invoice", "Invoice", 34],
  ["tasks", "Tasks", 33],
  ["event", "Event", 34],
];

const eventWidths = [27, 30, 45, 270, 270, 150, 150, 150, 60, 60, 150, 150, null];
const eventHeads = ["Name", "Type", "Deadline", "Event time", "Warning", "", "", "Done/Dismissed", "User", "Reason to dismiss"];

/* ---------- parts ---------- */

const MenuItem = ({ icon, text, disabled }) => (
  <li>
    <MenuLink href="#" $disabled={disabled} aria-disabled={disabled}>
      <MenuIcon>
        <Icon name={icon} height={22} />
      </MenuIcon>
      {text}
    </MenuLink>
  </li>
);

const SidebarSection = ({ title, open, children }) => (
  <Section $open={open}>
    <SectionHead type="button" aria-expanded={!!open}>
      {title}
      <Icon name={open ? "chevronUp" : "chevronDown"} />
    </SectionHead>
    {children}
  </Section>
);

const Search = ({ label, value }) => (
  <SearchField>
    <input type="text" aria-label={label} placeholder={value ? undefined : `<${label}>`} defaultValue={value} />
    <ClearButton type="button" aria-label={`Clear ${label}`}>
      <Icon name="crossBlue" height={18} />
    </ClearButton>
  </SearchField>
);

const FilterMark = ({ type }) => {
  if (type === "abc") {
    return (
      <AbcMark>
        A<b>B</b>C
      </AbcMark>
    );
  }
  if (type === "eq") {
    return (
      <Indent>
        <Icon name="equals" />
      </Indent>
    );
  }
  return null;
};

const OrderTable = () => (
  <OrderGrid>
    <colgroup>
      {orderColumns.map((c, i) => (
        <col key={i} width={c.w} />
      ))}
    </colgroup>
    <thead>
      <tr>
        {orderColumns
          .filter((c) => c.head !== undefined)
          .map((c, i) => (
            <th key={i} colSpan={c.span}>
              {c.sorted ? (
                <SortHead>
                  {c.head}
                  <Icon name="sort" />
                </SortHead>
              ) : (
                c.head
              )}
            </th>
          ))}
      </tr>
    </thead>
    <tbody>
      <FilterCells>
        {orderColumns.map((c, i) => (
          <td key={i}>
            <FilterMark type={c.filter} />
          </td>
        ))}
      </FilterCells>
      <OrderRow>
        {orderColumns.map((c, i) => (
          <Cell key={i} $align={c.align}>
            {c.value}
          </Cell>
        ))}
      </OrderRow>
    </tbody>
  </OrderGrid>
);

const EventTable = () => (
  <EventGrid>
    <colgroup>
      {eventWidths.map((w, i) => (
        <col key={i} width={w || undefined} />
      ))}
    </colgroup>
    <thead>
      <tr>
        <th colSpan={3}>No.</th>
        {eventHeads.map((h, i) => (
          <th key={i}>{h}</th>
        ))}
      </tr>
    </thead>
    <tbody>
      <tr>
        <GroupCell colSpan={13}>
          <GroupButton type="button">
            <Icon name="collapse" />
            Fiber
          </GroupButton>
        </GroupCell>
      </tr>
      <EventRow $active>
        <GutterCell rowSpan={2} />
        <td />
        <Cell $align="right">1</Cell>
        <td>Orderconfirmation</td>
        <td>Relative to order creation</td>
        <Cell $align="center">+ 30m</Cell>
        <TimeCell>11.11.2022 - 13:25</TimeCell>
        <td />
        <ActionCell>
          <ActionButton type="button" aria-label="Done">
            <Icon name="approve" height={21} />
          </ActionButton>
        </ActionCell>
        <ActionCell>
          <ActionButton type="button" aria-label="Dismiss">
            <Icon name="forbid" height={18} />
          </ActionButton>
        </ActionCell>
        <td />
        <td />
        <td />
      </EventRow>
      <EventRow>
        <td />
        <Cell $align="right">2</Cell>
        <td>Order finished</td>
        <td>On order completion</td>
        <td />
        <td />
        <td />
        <td />
        <td />
        <td />
        <td />
        <td />
      </EventRow>
    </tbody>
  </EventGrid>
);

export default function App() {
  return (
    <Page>
      <GlobalStyle />
      <Sidebar>
        <ModuleButton type="button">
          <Icon name="orderPerson" />
          Order
          <Icon name="caret" />
        </ModuleButton>
        <SidebarSection title="Create order" open>
          <MenuList>
            {createItems.map(([icon, text]) => (
              <MenuItem key={text} icon={icon} text={text} />
            ))}
          </MenuList>
        </SidebarSection>
        <SidebarSection title="Order" />
        <SidebarSection title="Resource planner" />
        <SidebarSection title="FleetSystem" />
        <SidebarSection title="Invoice" />
        <SidebarSection title="Event" open>
          <MenuList>
            {eventItems.map(([icon, text, disabled]) => (
              <MenuItem key={text} icon={icon} text={text} disabled={disabled} />
            ))}
            <MenuDivider />
            {eventExtras.map(([icon, text]) => (
              <MenuItem key={text} icon={icon} text={text} />
            ))}
          </MenuList>
        </SidebarSection>
      </Sidebar>

      <Main>
        <StatusBar>
          {statuses.map(([icon, text], i) => (
            <StatusButton key={text} type="button" $active={i === 0}>
              <StatusIcon>
                <Icon name={icon} />
              </StatusIcon>
              {text}
            </StatusButton>
          ))}
          <StatusButton type="button" $last>
            <StatusIcon>
              <Icon name="history" />
            </StatusIcon>
            History
          </StatusButton>
        </StatusBar>

        <Filters>
          <FilterRow>
            <MatchGroup>
              <ToolButton type="button" $active>
                <span>
                  <em>a</em>bc
                </span>
              </ToolButton>
              <ToolButton type="button">
                <span>
                  a<em>b</em>c
                </span>
              </ToolButton>
            </MatchGroup>
            <Search label="Order" value="93" />
            <Search label="Customer" />
            <Search label="Address" />
            <Search label="Other" />
            <ToolButton type="button" aria-label="Search">
              <Icon name="search" />
            </ToolButton>
            <ToolButton type="button" aria-label="Search everywhere">
              <Icon name="globe" />
            </ToolButton>
            <ToolButton type="button" aria-label="Clear all">
              <Icon name="crossBlue" height={18} />
            </ToolButton>
            <Entries>
              <span>No. of entries:</span>
              <span>1</span>
            </Entries>
          </FilterRow>
          <FilterRow>
            {selects.map((s) => (
              <SelectField key={s.text} $width={s.width} $indent={s.indent} $off={s.off}>
                <select aria-label={s.text} disabled={s.off}>
                  <option>{s.text}</option>
                </select>
                <Icon name="caret" />
              </SelectField>
            ))}
          </FilterRow>
        </Filters>

        <OrderPane>
          <OrderTable />
        </OrderPane>
        <ScrollBar>
          <ScrollEnd type="button" aria-label="Scroll left">
            <Icon name="arrowLeft" />
          </ScrollEnd>
          <ScrollThumb>
            <i />
            <i />
            <i />
            <i />
          </ScrollThumb>
          <ScrollEnd type="button" aria-label="Scroll right" $right>
            <Icon name="arrowRight" />
          </ScrollEnd>
        </ScrollBar>
        <Splitter>
          <i />
          <i />
          <i />
          <i />
        </Splitter>

        <Details>
          <DetailHead>
            <TabBar>
              <TabGroup>
                {tabs.map(([icon, text, height, width]) => (
                  <Tab key={text} type="button" $width={width} $active={text === "Event"}>
                    <TabIcon>
                      <Icon name={icon} height={height} />
                    </TabIcon>
                    {text}
                  </Tab>
                ))}
              </TabGroup>
              <Tab type="button" $width={102}>
                <TabIcon>
                  <Icon name="log" height={34} />
                </TabIcon>
                Log
              </Tab>
            </TabBar>
            <InfoBar>
              <InfoText>Order created: 11.11.2022 - 12:55</InfoText>
              <InfoText>Order started:</InfoText>
              <MoveGroup>
                <MoveButton type="button">
                  <Icon name="moveUp" />
                  Move point up
                </MoveButton>
                <MoveButton type="button">
                  <Icon name="moveDown" />
                  Move point down
                </MoveButton>
              </MoveGroup>
            </InfoBar>
          </DetailHead>
          <EventPane>
            <EventTable />
          </EventPane>
          <Pointer>
            <Icon name="cursor" />
          </Pointer>
        </Details>
      </Main>
      <IconDefs />
    </Page>
  );
}
